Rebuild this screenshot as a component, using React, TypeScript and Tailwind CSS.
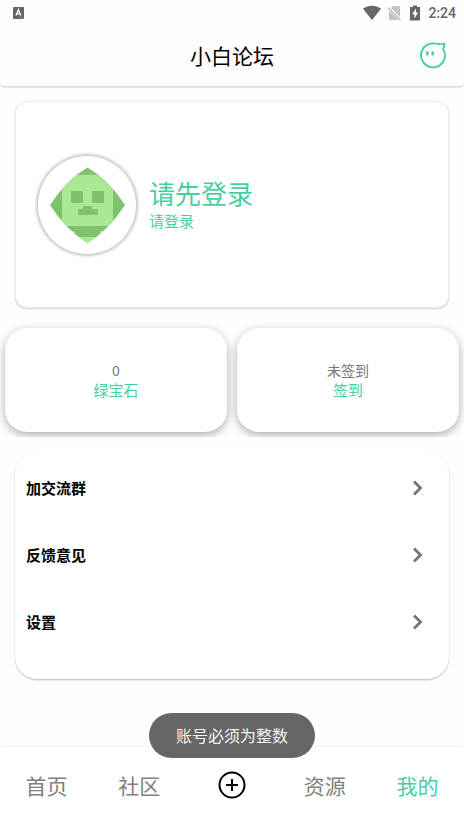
import React from "react";

const menuItems = ["加交流群", "反馈意见", "设置"];

function StatusBar() {
  return (
    <div className="flex h-[25px] items-center justify-between pr-2 pl-[13px] text-[#666666]">
      <svg className="h-3 w-[11px]" viewBox="0 0 11 12" aria-hidden="true">
        <rect width="11" height="12" rx="1" fill="#666" />
        <path d="M3 8.500 5.400 2.800 7.800 8.500M3.800 6.900h3.200" fill="none" stroke="#fff" strokeWidth="1.400" />
        <path d="M6 10.500h4" stroke="#aaa" strokeWidth="1" strokeDasharray="1 1" />
      </svg>
      <div className="flex items-center">
        <svg className="mr-[7px] h-4 w-[18px]" viewBox="0 0 18 16" aria-hidden="true">
          <path d="M0 3.800C5-.2 13-.2 18 3.800L9 15Z" fill="#666" />
        </svg>
        <svg className="mr-[9px] h-4 w-[13px]" viewBox="0 0 13 16" aria-hidden="true">
          <path d="M5 1h6q1 0 1 1v13H1V5Z" fill="#c4c4c4" />
          <path d="M0 2 13 15" stroke="#fff" strokeWidth="3" />
          <path d="M0 2.500 12.500 15" stroke="#b5b5b5" strokeWidth="1.200" />
        </svg>
        <svg className="mr-2 h-4 w-[10px]" viewBox="0 0 10 16" aria-hidden="true">
          <path d="M3 .5h4V2h3v13.500H0V2h3Z" fill="#666" />
          <path d="M6 3.500 2 9.300h2.300V13.500L8.200 7.500H6Z" fill="#fff" />
        </svg>
        <span className="font-['Roboto',sans-serif] text-sm leading-5 font-medium">2:24</span>
      </div>
    </div>
  );
}

function Header() {
  return (
    <header className="grid h-[62px] grid-cols-[1fr_auto_1fr] items-center rounded-b border-b border-[#dcdcdc] px-[17px] pb-0.5 shadow-[0_1px_1px_#00000018]">
      <h1 className="col-start-2 text-[21px] leading-7 text-black">小白论坛</h1>
      <button type="button" aria-label="消息" className="justify-self-end">
        <svg className="h-7 w-7" viewBox="0 0 28 28" fill="none" stroke="#48cf9c" aria-hidden="true">
          <path
            d="M19.500 2.900C16.500 2.300 11.500 2.300 8.500 3.700A12 12 0 1 0 26 13.500C25.900 11.500 25.200 9.800 24 8 24.900 6.500 25.500 4.800 25.600 2.500 23.800 2.500 22 4.200 19.500 2.900Z"
            strokeWidth="1.900"
            strokeLinejoin="round"
          />
          <path d="M8.300 11.500v1.800M13.700 11.500v1.800" strokeWidth="2.600" strokeLinecap="round" />
        </svg>
      </button>
    </header>
  );
}

function Avatar() {
  return (
    <div className="flex h-[98px] w-[98px] shrink-0 items-center justify-center rounded-full bg-white shadow-[0_0_3px_2px_#00000038]">
      <svg className="h-[76px] w-[76px]" viewBox="0 0 76 76" role="img" aria-label="头像">
        <defs>
          <clipPath id="avatar-shape">
            <path d="M38.500 .5Q60 13 76 38 60 63 38.500 76 17 63 1 38 17 13 38.500 .5Z" />
          </clipPath>
        </defs>
        <g clipPath="url(#avatar-shape)" shapeRendering="crispEdges">
          <path d="M0 0h76v76H0Z" fill="#80c26b" />
          <path d="M13 8h51v51H13Z" fill="#aae894" />
          <path d="M0 64h26v6h25v-6h25v12H0Z" fill="#aae894" />
          <path d="M22 24h12v12H22ZM43 24h12v12H43ZM34 39h9v3h6v6H29v-6h5Z" fill="#80c26b" />
        </g>
      </svg>
    </div>
  );
}

function StatCard({ value, label }: { value: string; label: string }) {
  return (
    <button
      type="button"
      className="flex h-[104px] flex-1 flex-col items-center justify-center rounded-[22px] bg-white shadow-[0_3px_10px_#00000050]"
    >
      <span className="text-sm leading-5 text-[#757575]">{value}</span>
      <span className="text-[15px] leading-5 text-[#48cf9c]">{label}</span>
    </button>
  );
}

function NavItem({ label, active = false }: { label: string; active?: boolean }) {
  return (
    <button
      type="button"
      aria-current={active ? "page" : undefined}
      className={active ? "text-[#48cf9c]" : "text-[#808080]"}
    >
      {label}
    </button>
  );
}

export default function App() {
  return (
    <div className="flex min-h-screen flex-col bg-[#fefefe] font-['Noto_Sans_CJK_SC',sans-serif]">
      <StatusBar />
      <Header />
      <main className="flex flex-1 flex-col">
        <section className="mx-[15px] mt-3.5 flex h-[207px] items-center gap-[13px] rounded-xl border border-[#ececec] bg-white pl-[22px] shadow-[0_1px_2px_#00000030]">
          <Avatar />
          <button type="button" className="flex flex-col items-start text-[#48cf9c]">
            <span className="text-[26px] leading-8">请先登录</span>
            <span className="text-[15px] leading-6">请登录</span>
          </button>
        </section>
        <section className="mt-2.5 flex gap-2.5 overflow-hidden px-[5px] pt-2.5 pb-[5px]">
          <StatCard value="0" label="绿宝石" />
          <StatCard value="未签到" label="签到" />
        </section>
        <section className="mx-[15px] mt-[15px] rounded-[22px] bg-white pt-0.5 pb-6 shadow-[0_1px_2px_#00000048]">
          {menuItems.map((item) => (
            <button key={item} type="button" className="flex h-[67px] w-full items-center justify-between pr-[25px] pl-[11px]">
              <span className="text-[15px] leading-6 font-bold text-black">{item}</span>
              <svg className="h-4 w-3" viewBox="0 0 12 16" fill="none" aria-hidden="true">
                <path d="m2 1.500 6.500 6.500L2 14.500" stroke="#757575" strokeWidth="2.800" />
              </svg>
            </button>
          ))}
        </section>
      </main>
      <nav className="grid h-[78px] grid-cols-5 rounded-t border-t border-[#f2f2f2] bg-white pb-0.5 text-[21px] leading-7">
        <NavItem label="首页" />
        <NavItem label="社区" />
        <button type="button" aria-label="发布" className="flex items-center justify-center">
          <svg className="h-7 w-7" viewBox="0 0 28 28" fill="none" stroke="#000" strokeWidth="2" aria-hidden="true">
            <circle cx="14" cy="14" r="12.500" />
            <path d="M14 8v12M8 14h12" />
          </svg>
        </button>
        <NavItem label="资源" />
        <NavItem label="我的" active />
      </nav>
      <div
        role="status"
        className="fixed bottom-[66px] left-1/2 -translate-x-1/2 rounded-full bg-[#666666] px-[27px] py-[10px] text-base leading-[25px] whitespace-nowrap text-[#f5f5f5]"
      >
        账号必须为整数
      </div>
    </div>
  );
}
